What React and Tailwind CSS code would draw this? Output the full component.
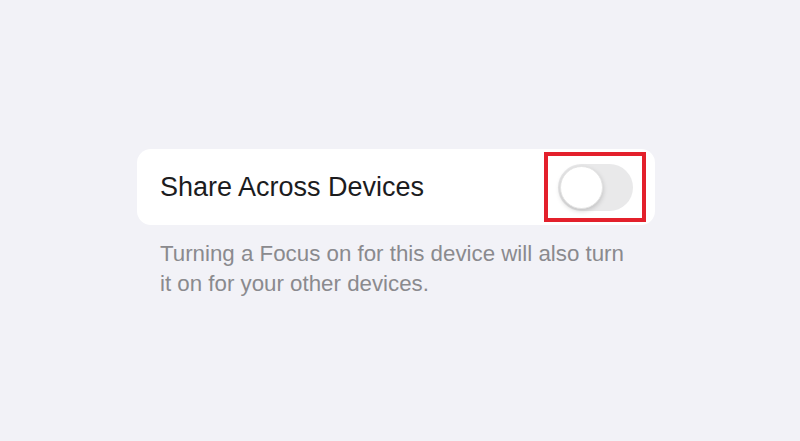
export default function App() {
  return (
    <div
      className="w-full h-[441px] bg-[#f2f2f7] pt-[149px] pl-[137px]"
      style={{ fontFamily: '"Liberation Sans", Arial, sans-serif' }}
    >
      <div className="w-[518px]">
        <div className="h-[76px] bg-white rounded-[14px] flex items-center justify-between pl-[23px] pr-[9px]">
          <span className="text-[27px] text-[#1c1c1e] tracking-[0px]">Share Across Devices</span>
          <div className="w-[102px] h-[70px] border-[4px] border-[#e3202b] flex items-center justify-center">
            <div className="w-[75px] h-[47px] rounded-full bg-[#e9e9ea] p-[2px] flex items-center">
              <div className="w-[43px] h-[43px] rounded-full bg-white shadow-[0_2px_5px_rgba(0,0,0,0.18)] border border-[#e4e4e4]" />
            </div>
          </div>
        </div>
        <p className="mt-[14px] pl-[23px] text-[22.3px] leading-[30px] text-[#8a8a8e] whitespace-nowrap">
          Turning a Focus on for this device will also turn
          <br />
          it on for your other devices.
        </p>
      </div>
    </div>
  );
}
